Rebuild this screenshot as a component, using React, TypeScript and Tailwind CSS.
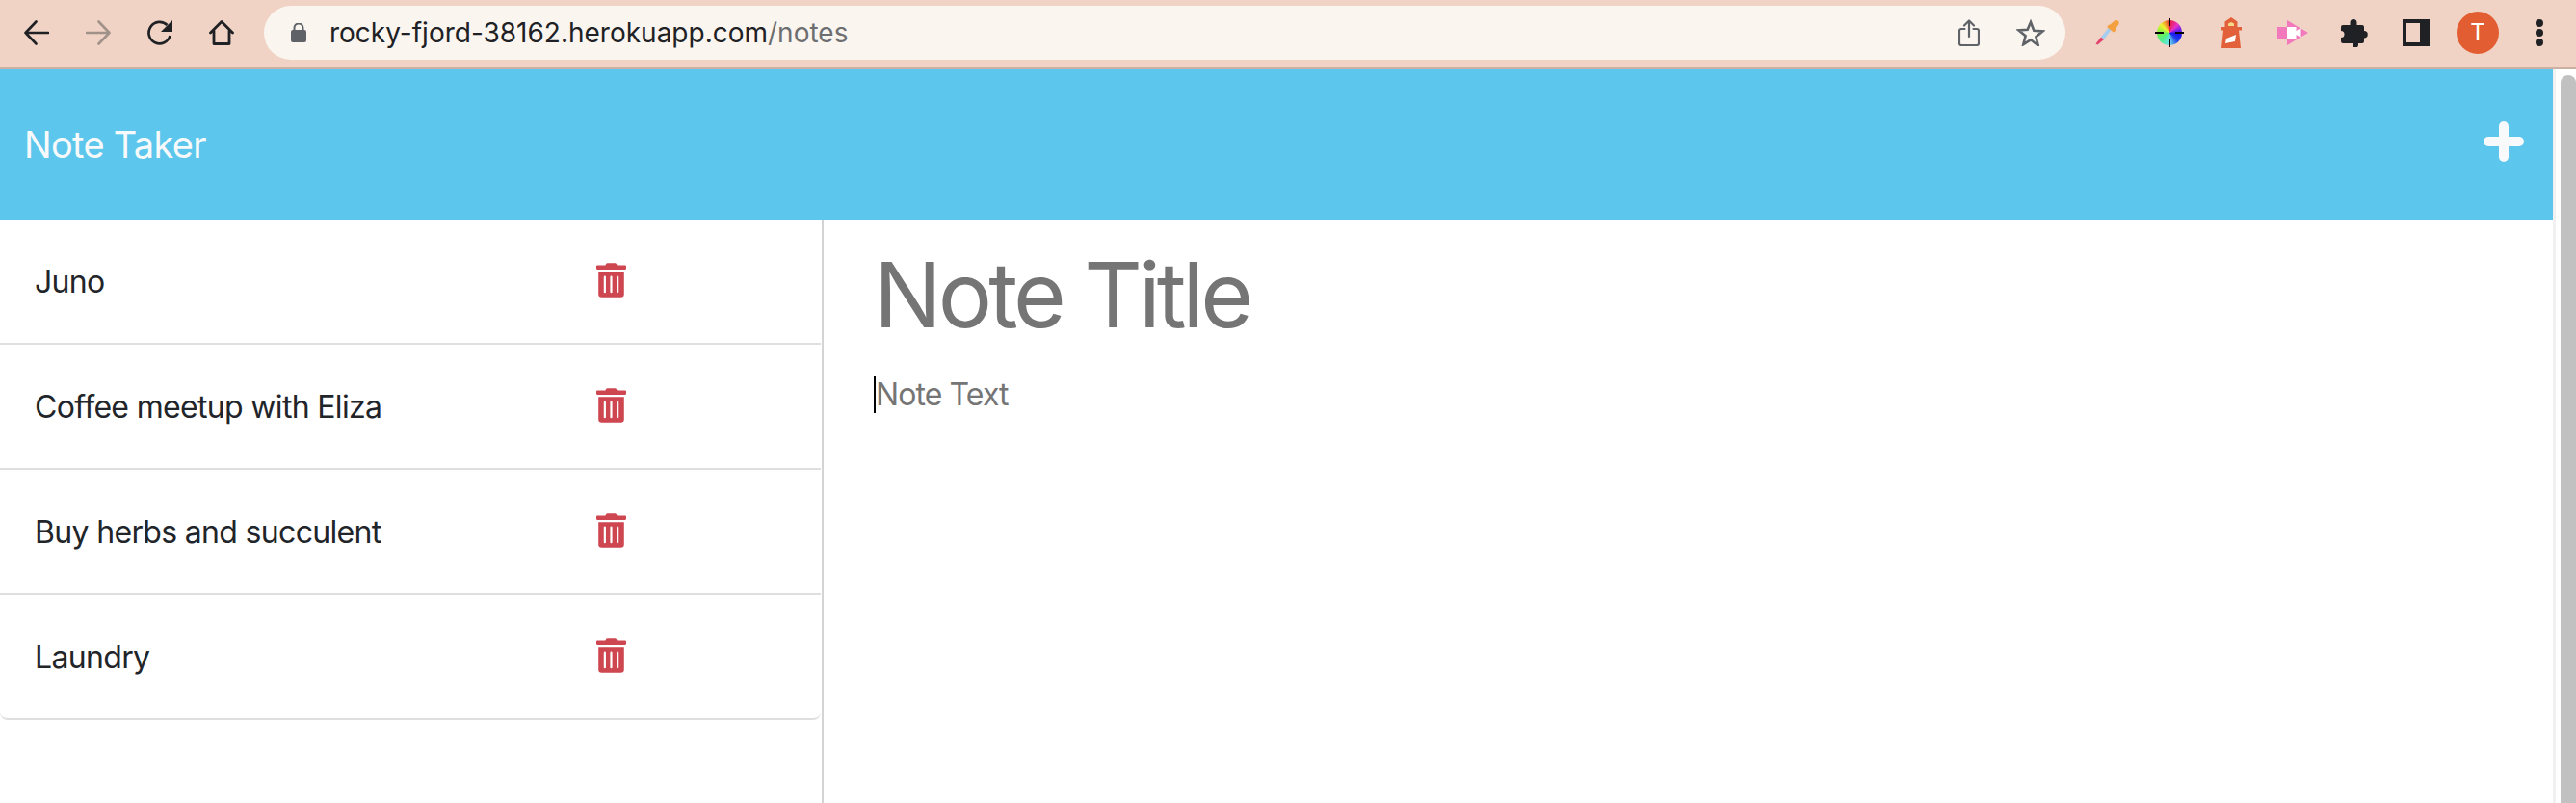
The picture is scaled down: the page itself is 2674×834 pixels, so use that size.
import { FaTrashAlt } from 'react-icons/fa'

const NOTES = ['Juno', 'Coffee meetup with Eliza', 'Buy herbs and succulent', 'Laundry']

function BackIcon({ className }: { className: string }) {
  return (
    <svg className={className} viewBox="0 0 26 26" fill="none" stroke="currentColor" strokeWidth={2.6} strokeLinecap="round" strokeLinejoin="round">
      <path d="M25 13H1.5M12.5 1.5 1.5 13l11 11.5" />
    </svg>
  )
}

function ForwardIcon({ className }: { className: string }) {
  return (
    <svg className={className} viewBox="0 0 26 26" fill="none" stroke="currentColor" strokeWidth={2.6} strokeLinecap="round" strokeLinejoin="round">
      <path d="M1 13h23.5M13.5 1.5 24.5 13l-11 11.5" />
    </svg>
  )
}

function ReloadIcon() {
  return (
    <svg className="w-[28px] h-[28px] text-[#202124]" viewBox="0 0 28 28" fill="none">
      <path d="M24.5 17a11.2 11.2 0 1 1-3-11" stroke="currentColor" strokeWidth={2.7} />
      <path d="M27 1v12H15z" fill="currentColor" />
    </svg>
  )
}

function HomeIcon() {
  return (
    <svg className="w-[26px] h-[26px] text-[#202124]" viewBox="0 0 26 26" fill="none" stroke="currentColor" strokeWidth={2.8} strokeLinecap="round" strokeLinejoin="round">
      <path d="M1.5 13 13 1.5 24.5 13M5 11v13.500h16V11" />
    </svg>
  )
}

function LockIcon() {
  return (
    <svg className="w-[16px] h-[20px] text-[#5f6368]" viewBox="0 0 16 20" fill="none">
      <rect x="0" y="7" width="16" height="13" rx="2" fill="currentColor" />
      <path d="M3.500 8V5a4.500 4.500 0 0 1 9 0v3" stroke="currentColor" strokeWidth={2} />
    </svg>
  )
}

function ShareIcon() {
  return (
    <svg className="w-[22px] h-[28px] text-[#5f6368]" viewBox="0 0 22 28" fill="none" stroke="currentColor" strokeWidth={2.2} strokeLinecap="round" strokeLinejoin="round">
      <path d="M6.500 10H3a2 2 0 0 0-2 2v13a2 2 0 0 0 2 2h16a2 2 0 0 0 2-2V12a2 2 0 0 0-2-2h-3.500" />
      <path d="M11 18V1.500M6 6.500l5-5 5 5" />
    </svg>
  )
}

function StarIcon() {
  return (
    <svg className="w-[30px] h-[28px] text-[#5f6368]" viewBox="0 0 30 28" fill="none" stroke="currentColor" strokeWidth={2.6} strokeLinejoin="miter">
      <path d="m15 3 3.300 8.800 9.200.6-7.100 5.900 2.300 8.900L15 21.300l-7.700 4.900 2.300-8.900-7.100-5.900 9.200-.6z" />
    </svg>
  )
}

function DropperIcon() {
  return (
    <svg className="w-[26px] h-[26px]" viewBox="0 0 26 26">
      <path d="M17 9.500 9 20l-3-2.500 8-10z" fill="#a5cdf2" />
      <path d="M9 20 2.500 25.500l-2-1L6 17.500z" fill="#e4426e" />
      <path d="m13 5.500 3-1.500 4-3.500a3 3 0 0 1 4.500 3.500l-3 4.500-1 3-1.500 1-6.500-5z" fill="#f5a03f" />
    </svg>
  )
}

function ColorWheel() {
  return (
    <div className="relative w-[30px] h-[30px] flex items-center justify-center">
      <div className="w-[26px] h-[26px] rounded-full bg-[conic-gradient(#e8203c,#e830c8_45deg,#7020e8_75deg,#1818f0_100deg,#2040e8_135deg,#70e0f0_180deg,#50ee90_225deg,#70f050_265deg,#f0f030_315deg,#f09030_340deg,#e8203c)]" />
      <div className="absolute top-0 left-[14px] w-[2px] h-[8px] bg-black" />
      <div className="absolute bottom-0 left-[14px] w-[2px] h-[8px] bg-black" />
      <div className="absolute left-0 top-[14px] w-[9px] h-[2px] bg-black" />
      <div className="absolute right-0 top-[14px] w-[9px] h-[2px] bg-black" />
    </div>
  )
}

function LighthouseIcon() {
  return (
    <svg className="w-[22px] h-[32px]" viewBox="0 0 22 32">
      <path d="M11 0 17.500 4.500V10H22v3.500h-3L21 32H1L3 13.500H0V10h4.500V4.500z" fill="#e2603a" />
      <path d="M8 9V6.500L11 5l3 1.500V9z" fill="#f4d98a" />
      <path d="M6 22l10-4-1 7-10 2z" fill="#fff" />
    </svg>
  )
}

function PinkVideoIcon() {
  return (
    <svg className="w-[32px] h-[26px]" viewBox="0 0 32 26">
      <path d="M0 7h10V0l22 13-22 13v-7H0z" fill="#f27abc" />
      <path d="M10 7h9.500v4l5-3v10l-5-3v4H10z" fill="#fff" />
    </svg>
  )
}

function PuzzleIcon() {
  return (
    <svg className="w-[28px] h-[29px] text-[#202124]" viewBox="0 0 28 29" fill="currentColor">
      <path d="M2 6h7.500V3.500a3.500 3.500 0 0 1 7 0V6H22a2 2 0 0 1 2 2v4a3.500 3.500 0 0 1 0 7.500V23a2 2 0 0 1-2 2h-4v1.500a3 3 0 0 1-6 0V25H2a2 2 0 0 1-2-2v-4a3.500 3.500 0 0 0 0-7V8a2 2 0 0 1 2-2z" />
    </svg>
  )
}

export default function App() {
  return (
    <div className="w-full h-[834px] flex flex-col overflow-hidden bg-white font-['Inter',sans-serif]">
      <div className="h-[72px] shrink-0 flex items-start bg-[#f0d3c5] border-b-2 border-[#cbb0a3] pr-[6px]">
        <div className="flex h-[68px] pl-[6px]">
          <div className="w-[64px] flex items-center justify-center"><BackIcon className="w-[26px] h-[26px] text-[#202124]" /></div>
          <div className="w-[64px] flex items-center justify-center"><ForwardIcon className="w-[26px] h-[26px] text-[#a09189]" /></div>
          <div className="w-[64px] flex items-center justify-center"><ReloadIcon /></div>
          <div className="w-[64px] flex items-center justify-center"><HomeIcon /></div>
        </div>
        <div className="flex-1 h-[56px] mt-[6px] ml-[12px] rounded-full bg-[#fbf5f0] flex items-center pl-[28px] pr-[21px]">
          <LockIcon />
          <span className="ml-[24px] text-[28px] leading-[34px] text-[#202124]">
            rocky-fjord-38162.herokuapp.com<span className="text-[#6d6e70]">/notes</span>
          </span>
          <div className="ml-auto flex items-center gap-[38px]">
            <ShareIcon />
            <StarIcon />
          </div>
        </div>
        <div className="flex h-[68px] ml-[12px]">
          <div className="w-[64px] flex items-center justify-center"><DropperIcon /></div>
          <div className="w-[64px] flex items-center justify-center"><ColorWheel /></div>
          <div className="w-[64px] flex items-center justify-center"><LighthouseIcon /></div>
          <div className="w-[64px] flex items-center justify-center"><PinkVideoIcon /></div>
          <div className="w-[64px] flex items-center justify-center"><PuzzleIcon /></div>
          <div className="w-[64px] flex items-center justify-center">
            <div className="w-[28px] h-[28px] bg-[#202124] pl-[4px] py-[4px]">
              <div className="w-[14px] h-[20px] bg-[#f0d3c5]" />
            </div>
          </div>
          <div className="w-[64px] flex items-center justify-center">
            <div className="w-[44px] h-[44px] rounded-full bg-[#e35d32] text-white text-[24px] flex items-center justify-center">T</div>
          </div>
          <div className="w-[64px] flex flex-col items-center justify-center gap-[2px]">
            <div className="w-[8px] h-[8px] rounded-full bg-[#202124]" />
            <div className="w-[8px] h-[8px] rounded-full bg-[#202124]" />
            <div className="w-[8px] h-[8px] rounded-full bg-[#202124]" />
          </div>
        </div>
      </div>

      <div className="flex-1 flex min-h-0">
        <div className="flex-1 flex flex-col min-w-0">
          <header className="h-[156px] shrink-0 bg-[#5cc6ec] flex items-center justify-between pl-[25px] pr-[30px]">
            <span className="text-[38px] leading-[48px] tracking-[-0.7px] text-[#f8f9fa]">Note Taker</span>
            <svg className="w-[42px] h-[42px] -mt-[6px] text-[#f8f9fa]" viewBox="0 0 42 42" fill="none" stroke="currentColor" strokeWidth={10} strokeLinecap="round">
              <path d="M21 5v32M5 21h32" />
            </svg>
          </header>
          <div className="flex-1 flex min-h-0">
            <div className="w-[855px] shrink-0 border-r-2 border-[#d4d4d4] pr-[1px]">
              <ul className="rounded-b-[8px] border-b-2 border-[#dfdfdf]">
                {NOTES.map((note, i) => (
                  <li
                    key={note}
                    className={`flex items-center justify-between pl-[36px] pr-[202px] ${i < NOTES.length - 1 ? 'h-[130px] border-b-2 border-[#dfdfdf]' : 'h-[128px]'}`}
                  >
                    <span className="mt-[1px] text-[32px] leading-[38px] tracking-[-0.67px] text-[#212529]">{note}</span>
                    <FaTrashAlt className="w-[31px] h-[36px] text-[#cd4650] -mt-[2px]" />
                  </li>
                ))}
              </ul>
            </div>
            <div className="flex-1 pl-[52px] pt-[20px]">
              <div className="text-[94px] leading-[116px] tracking-[-4px] text-[#757575]">Note Title</div>
              <div className="mt-[27px] border-l-2 border-black text-[32px] leading-[38px] tracking-[-0.9px] text-[#757575]">Note Text</div>
            </div>
          </div>
        </div>
        <div className="w-[24px] shrink-0 bg-white border-l-[3px] border-[#f1f1f1] flex justify-end pt-[6px]">
          <div className="w-[16px] h-[900px] rounded-t-full bg-[#c1c1c1]" />
        </div>
      </div>
    </div>
  )
}
